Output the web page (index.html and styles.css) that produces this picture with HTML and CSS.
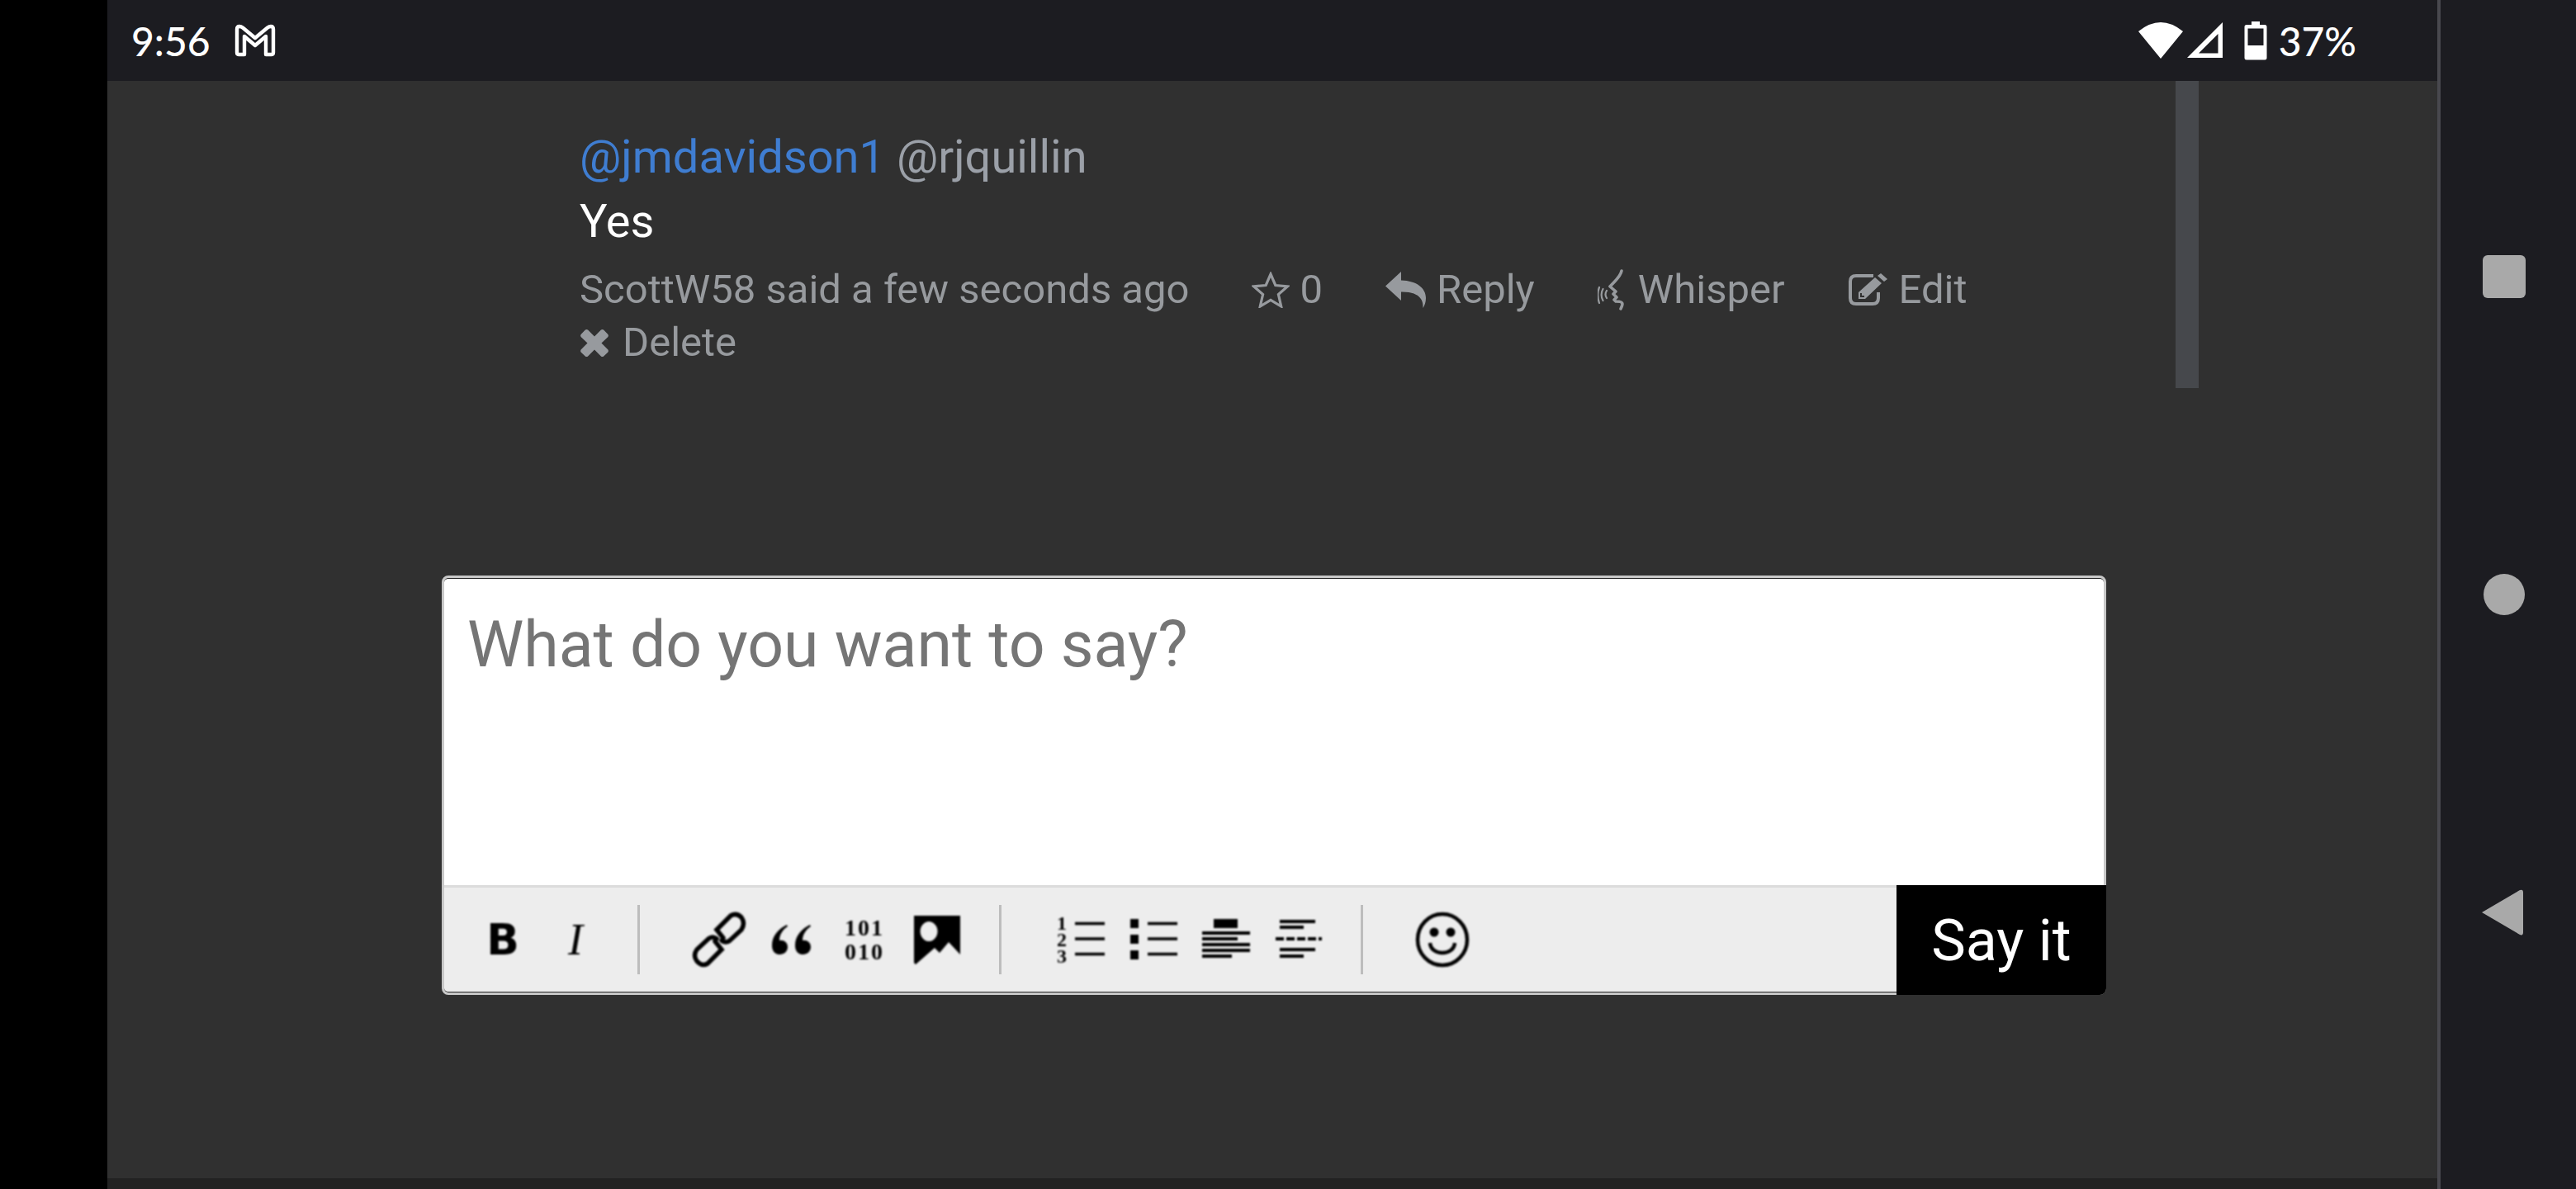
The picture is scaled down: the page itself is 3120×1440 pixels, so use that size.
FILE: index.html
```html
<!DOCTYPE html>
<html lang="en">
<head>
<meta charset="utf-8">
<title>Comment</title>
<link rel="stylesheet" href="styles.css">
</head>
<body>
<div class="gutter"></div>
<div class="main">
  <header class="status">
    <div class="status-left">
      <span class="time">9:56</span>
      <svg class="i-gmail" width="50" height="40" viewBox="0 0 50 40"><path d="M3 6.500Q3 3 6 3Q8 3 10 4.500L25 17L40 4.500Q42 3 44 3Q47 3 47 6.500V34.500Q47 37 44.500 37H38V15L25 26L12 15V37H5.500Q3 37 3 34.500Z" fill="none" stroke="#fff" stroke-width="4.400" stroke-linejoin="round"/></svg>
    </div>
    <div class="status-right">
      <svg class="i-wifi" width="54" height="46" viewBox="0 0 54 46"><path d="M0 12Q27 -10 54 12L27 45Z" fill="#fff"/></svg>
      <svg class="i-signal" width="45" height="46" viewBox="0 0 45 46"><path d="M44 1V44H1ZM38.500 15L15 38.500H38.500Z" fill="#fff" fill-rule="evenodd"/></svg>
      <svg class="i-batt" width="28" height="47" viewBox="0 0 28 47"><path d="M9 0H19V4H25Q27.500 4 27.500 6.500V44Q27.500 46.500 25 46.500H3Q.5 46.500 .5 44V6.500Q.5 4 3 4H9ZM4.500 8.500V29H23.500V8.500Z" fill="#fff" fill-rule="evenodd"/></svg>
      <span class="pct">37%</span>
    </div>
  </header>
  <main class="content">
    <div class="scrollbar"></div>
    <article class="comment">
      <p class="mentions"><a class="m-blue">@jmdavidson1</a> <a class="m-grey">@rjquillin</a></p>
      <p class="body">Yes</p>
      <div class="meta">
        <span class="said">ScottW58 said a few seconds ago</span>
        <span class="act a-star">
          <svg width="46" height="44" viewBox="0 0 46 44"><path d="M23 3L28.800 16.500L43.500 17.800L32.400 27.500L35.700 42L23 34.400L10.300 42L13.600 27.500L2.500 17.800L17.200 16.500Z" fill="none" stroke="#979a9e" stroke-width="3.200" stroke-linejoin="miter"/></svg>0</span>
        <span class="act a-reply">
          <svg width="50" height="44" viewBox="0 0 50 44"><path d="M19 0V10.500C38 11 49 20 49 32C49 37 47.500 41 45.500 44C46 37 44 24 19 24.500V35L0 17.500Z" fill="#979a9e"/></svg>Reply</span>
        <span class="act a-whisper">
          <svg width="37" height="50" viewBox="0 0 37 50"><g fill="none" stroke="#979a9e" stroke-linecap="round" stroke-linejoin="round"><path d="M29 2C28 9 21 14 15 21L22 27L19 30L23 34L20 37L22 39C25 39 30 39 30 42C30 44 29 46 28 48" stroke-width="3.600"/><path d="M11 26C9 29 9 32 11 35M6.500 24C4 28 4 34 6.500 38M2 22C0 27 0 35 2 41" stroke-width="2.200"/></g></svg>Whisper</span>
        <span class="act a-edit">
          <svg width="50" height="40" viewBox="0 0 50 40"><path d="M31 3H10Q3 3 3 10V30Q3 37 10 37H30Q37 37 37 30V23" fill="none" stroke="#979a9e" stroke-width="4"/><path d="M13 23L33 5L41 12L21 31H13ZM36 3L40 0L48 7L44 10Z" fill="#979a9e"/><path d="M16 24V28H20" fill="none" stroke="#303030" stroke-width="2"/></svg>Edit</span>
        <span class="act a-delete">
          <svg width="36" height="35" viewBox="0 0 34 33"><path d="M9.500 1.500L17 9L24.500 1.500Q26 .5 27.500 1.500L32.500 6.500Q33.500 8 32.500 9.500L25 16.500L32.500 24Q33.500 25.500 32.500 27L27.500 31.500Q26 32.500 24.500 31.500L17 24L9.500 31.500Q8 32.500 6.500 31.500L1.500 27Q.5 25.500 1.500 24L9 16.500L1.500 9.500Q.5 8 1.500 6.500L6.500 1.500Q8 .5 9.500 1.500Z" fill="#979a9e"/></svg>Delete</span>
      </div>
    </article>
    <form class="composer">
      <div class="input">What do you want to say?</div>
      <div class="toolbar">
        <div class="group">
          <span class="btn t-bold">B</span>
          <span class="btn t-ital">I</span>
        </div>
        <span class="sep"></span>
        <div class="group">
          <span class="btn"><svg width="68" height="68" viewBox="0 0 68 68"><g fill="none" stroke="#000" stroke-width="5.500" stroke-linecap="round"><path d="M29 36L37 46L20 63Q13 67 7 60Q2 53 7 46L21 33Q26 29 31 33"/><path d="M39 32L31 22L48 5Q55 1 61 7Q66 14 61 22L47 35Q42 39 37 35"/></g></svg></span>
          <span class="btn"><svg width="52" height="38" viewBox="0 0 52 38"><path d="M20 1C10 6 2 14 2 26C2 33 6 37 11 37C17 37 21 33 21 28C21 22 16 19 11 20C11 13 15 7 21 3ZM48 1C38 6 30 14 30 26C30 33 34 37 39 37C45 37 49 33 49 28C49 22 44 19 39 20C39 13 43 7 49 3Z" fill="#000"/></svg></span>
          <span class="btn t-bin">101<br>010</span>
          <span class="btn"><svg width="58" height="60" viewBox="0 0 58 60"><path d="M1 1H57V48L43 33L32 46L26 40L3 60L1 58ZM19 8A10.500 12 0 1 0 19.100 8Z" fill="#000" fill-rule="evenodd"/></svg></span>
        </div>
        <span class="sep"></span>
        <div class="group">
          <span class="btn t-ol"><span class="ol-nums">1<br>2<br>3</span><svg width="36" height="62" viewBox="0 0 36 62"><path d="M0 11.500H36M0 30H36M0 48.500H36" stroke="#000" stroke-width="3.500"/></svg></span>
          <span class="btn"><svg width="58" height="62" viewBox="0 0 58 62"><path d="M1 6H11V17H1ZM1 25H11V36H1ZM1 44H11V55H1Z" fill="#000"/><path d="M22 11.500H58M22 30H58M22 48.500H58" stroke="#000" stroke-width="3.500"/></svg></span>
          <span class="btn"><svg width="58" height="60" viewBox="0 0 58 60"><path d="M14 5H43V16H14Z" fill="#000"/><path d="M0 22H58M0 29H43M0 36H58M0 43H58M0 50H36" stroke="#000" stroke-width="4"/></svg></span>
          <span class="btn"><svg width="56" height="60" viewBox="0 0 56 60"><path d="M5 8H48M5 15H34M5 42H48M5 50H34" stroke="#000" stroke-width="4"/><path d="M0 29H56" stroke="#000" stroke-width="4" stroke-dasharray="10 3"/></svg></span>
        </div>
        <span class="sep"></span>
        <div class="group">
          <span class="btn"><svg width="68" height="68" viewBox="0 0 68 68"><ellipse cx="34" cy="34" rx="30" ry="31" fill="none" stroke="#000" stroke-width="4.500"/><circle cx="24" cy="25" r="5.500" fill="#000"/><circle cx="44" cy="25" r="5.500" fill="#000"/><path d="M19 38C20 54 48 54 49 38" fill="none" stroke="#000" stroke-width="4.500"/></svg></span>
        </div>
      </div>
      <button class="say" type="button">Say it</button>
    </form>
  </main>
  <div class="strip"></div>
</div>
<nav class="nav">
  <svg width="60" height="60" viewBox="0 0 60 60"><rect x="4" y="4" width="52" height="52" rx="6" fill="#a9a9a9"/></svg>
  <svg width="60" height="60" viewBox="0 0 60 60"><circle cx="30" cy="30" r="25" fill="#a9a9a9"/></svg>
  <svg width="60" height="60" viewBox="0 0 60 60"><path d="M3 30L49 3Q53 1.500 53 6V54Q53 58.500 49 57Z" fill="#a9a9a9"/></svg>
</nav>
</body>
</html>
```
FILE: styles.css
```css
* { box-sizing: border-box; }
html, body { margin: 0; height: 100%; }
body {
  display: flex;
  width: 3120px;
  height: 1440px;
  overflow: hidden;
  background: #000;
  font-family: Roboto, "Liberation Sans", sans-serif;
}
.gutter { width: 130px; flex: none; background: #000; }
.main {
  width: 2826px;
  flex: none;
  display: flex;
  flex-direction: column;
  border-right: 4px solid #48484e;
}
.nav {
  width: 164px;
  flex: none;
  background: #1c1c21;
  display: flex;
  flex-direction: column;
  align-items: center;
  justify-content: center;
  gap: 325px;
  padding-right: 10px;
}
.status {
  height: 98px;
  flex: none;
  background: #1c1c21;
  color: #fff;
  display: flex;
  justify-content: space-between;
  align-items: center;
  padding: 0 98px 0 29px;
  font-family: Lato, Roboto, sans-serif;
  font-size: 48px;
  font-weight: 500;
}
.status-left, .status-right { display: flex; align-items: center; }
.time { margin-right: 29px; }
.i-wifi { margin-right: 4px; }
.i-signal { margin-right: 25px; }
.i-batt { margin-right: 14px; }
.content {
  position: relative;
  flex: 1;
  background: #303030;
  padding: 53px 0 0 572px;
}
.scrollbar {
  position: absolute;
  top: 0;
  left: 2505px;
  width: 28px;
  height: 372px;
  background: #46484c;
}
.comment { width: 1925px; }
.mentions { margin: 0; font-size: 56px; line-height: 78px; height: 78px; }
.m-blue { color: #3f7dd1; }
.m-grey { color: #9ba0a8; }
.body { margin: 0; font-size: 56px; line-height: 78px; color: #fff; }
.meta {
  display: flex;
  flex-wrap: wrap;
  color: #979a9e;
  font-size: 49px;
  line-height: 64px;
  margin-top: 12px;
}
.act { display: inline-flex; align-items: center; margin-left: 76px; }
.act svg { margin-right: 12px; }
.a-delete { margin-left: 0; flex-basis: 100%; }
.a-delete svg { margin-right: 16px; }
.composer {
  position: relative;
  width: 2016px;
  margin: 250px 0 0 -167px;
  border: 3px solid #c8c8c8;
  border-radius: 8px;
  background: #fff;
}
.input {
  height: 372px;
  border-top: 1px solid #222;
  padding: 34px 0 0 28px;
  font-size: 77px;
  line-height: 92px;
  color: #757575;
  border-radius: 5px 5px 0 0;
}
.toolbar {
  height: 130px;
  background: #ededed;
  border-top: 3px solid #dcdcdc;
  border-bottom: 1px solid #222;
  border-radius: 0 0 5px 5px;
  display: flex;
  align-items: center;
  padding-left: 27px;
}
.group { display: flex; align-items: center; }
.btn {
  width: 88px;
  height: 90px;
  display: flex;
  align-items: center;
  justify-content: center;
  text-align: center;
  filter: blur(0.8px);
}
.sep { width: 3px; height: 84px; background: #bdbdbd; margin: 0 52px 0 31px; }
.t-bold { font: bold 52px "DejaVu Sans", sans-serif; color: #000; }
.t-ital { font: italic 54px "Liberation Serif", serif; color: #000; }
.t-bin { font: bold 28px/29px "Liberation Serif", serif; color: #000; letter-spacing: 2px; }
.ol-nums { width: 22px; font: bold 24px/20px "Liberation Serif", serif; color: #000; text-align: left; }
.say {
  position: absolute;
  right: -3px;
  bottom: -3px;
  width: 254px;
  height: 133px;
  border: 0;
  border-radius: 0 0 8px 0;
  background: #000;
  color: #fff;
  font-family: Roboto, sans-serif;
  font-size: 70px;
  padding: 0;
}
.strip { height: 13px; flex: none; background: #222; }
```
